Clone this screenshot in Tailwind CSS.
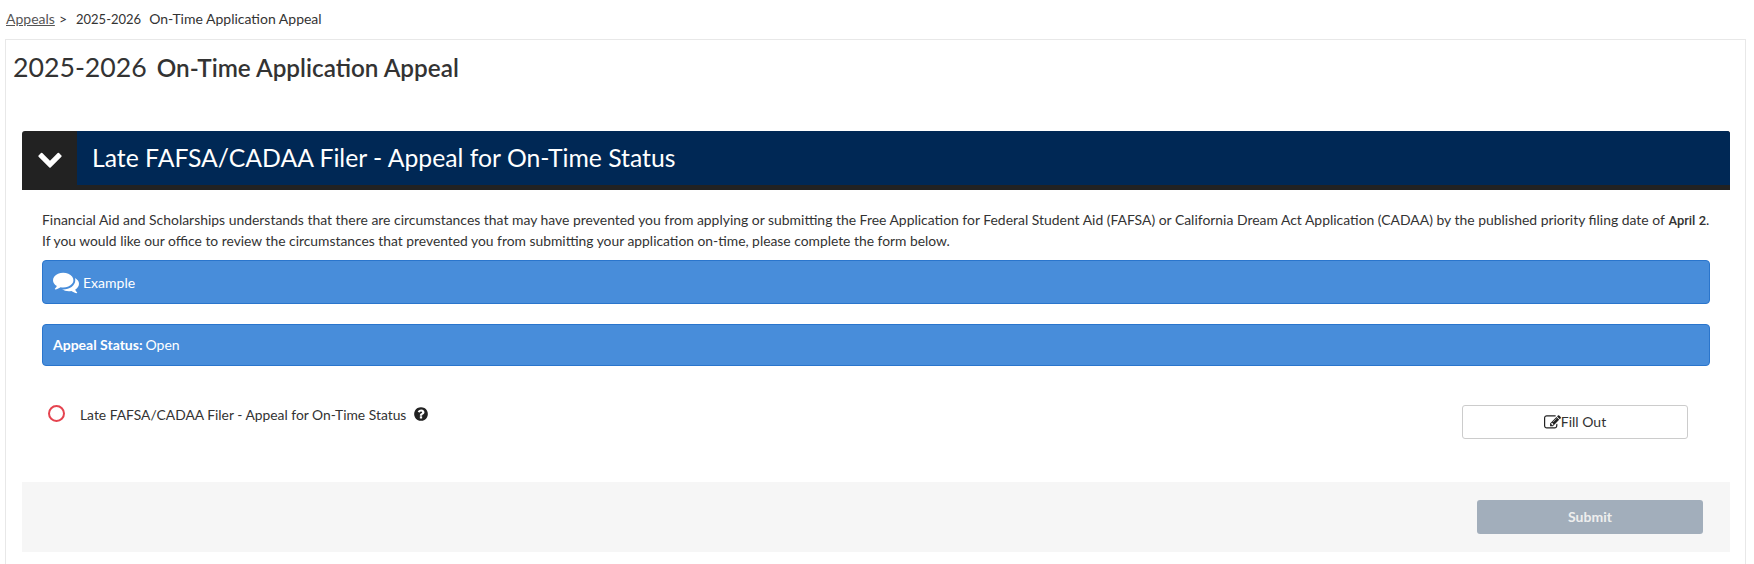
<!DOCTYPE html>
<html lang="en">
<head>
<meta charset="utf-8">
<title>On-Time Application Appeal</title>
<script src="https://cdn.jsdelivr.net/npm/@tailwindcss/browser@4"></script>
</head>
<body class="bg-white font-['Lato',sans-serif] text-[14px] leading-[20px] text-[#333] h-screen overflow-hidden">
  <!-- Breadcrumb -->
  <div class="h-[39px] pl-[6px] pt-[9px] flex text-[14px]">
    <a href="#" class="underline text-[#555]">Appeals</a>
    <span class="ml-[4px]">&gt;</span>
    <span class="ml-[9px] text-[13px]">2025-2026</span>
    <span class="ml-[8px]">On-Time Application Appeal</span>
  </div>

  <div class="ml-[5px] mr-[8px] border border-[#e8e8e8] pb-[40px]">
    <!-- Page title -->
    <div class="h-[91px] pl-[7px] pt-[9px] flex items-baseline gap-[10px] text-[#333]">
      <span class="text-[26.7px] leading-[36px]">2025-2026</span>
      <span class="text-[24.3px] leading-[36px] font-semibold">On-Time Application Appeal</span>
    </div>

    <div class="ml-[16px] mr-[15px]">
      <!-- Section header -->
      <div class="flex h-[59px] bg-[#222] rounded-t-[3px] overflow-hidden pb-[5px]">
        <div class="w-[55px] flex items-center justify-center">
          <svg class="w-[26px] h-[26px]" viewBox="0 0 1792 1792" fill="#fff"><path d="M1683 808l-742 741q-19 19-45 19t-45-19l-742-741q-19-19-19-45.500t19-45.500l166-165q19-19 45-19t45 19l531 531 531-531q19-19 45-19t45 19l166 165q19 19 19 45.500t-19 45.500z"/></svg>
        </div>
        <div class="flex-1 bg-[#002855] pl-[15px] flex items-center text-white text-[24.75px]">Late FAFSA/CADAA Filer - Appeal for On-Time Status</div>
      </div>

      <div class="pl-[20px] pr-[20px]">
        <p class="pt-[20px] text-[13.85px] leading-[19.5px] text-[#333] whitespace-nowrap">
          <span class="text-[13.93px]">Financial Aid and Scholarships understands that there are circumstances that may have prevented you from applying or submitting the Free Application for Federal Student Aid (FAFSA) or California Dream Act Application (CADAA) by the published priority filing date of</span> <span class="font-['Roboto',sans-serif] font-medium text-[13px]">April 2</span>.<br>
          If you would like our office to review the circumstances that prevented you from submitting your application on-time, please complete the form below.
        </p>

        <div class="mt-[10px] h-[44px] bg-[#488dda] border border-[#2a75cc] rounded-[4px] pl-[10px] flex items-center text-white text-[14px]">
          <svg class="w-[26px] h-[26px] mr-[4px]" viewBox="0 0 1792 1792" fill="#fff"><path d="M1408 768q0 139-94 257t-256.500 186.500-353.500 68.500q-86 0-176-16-124 88-278 128-36 9-86 16h-3q-11 0-20.500-8t-11.500-21q-1-3-1-6.500t.5-6.500 2-6l2.500-5 3.500-5.500 4-5 4.500-5 4-4.500q5-6 23-25t26-29.500 22.500-29 25-38.500 20.500-44q-124-72-195-177t-71-224q0-139 94-257t256.500-186.500 353.500-68.500 353.500 68.500 256.500 186.500 94 257zm384 256q0 120-71 224.500t-195 176.500q10 24 20.500 44t25 38.500 22.500 29 26 29.500 23 25q1 1 4 4.500t4.500 5 4 5 3.500 5.500l2.500 5 2 6 .5 6.500-1 6.500q-3 14-13 22t-22 7q-50-7-86-16-154-40-278-128-90 16-176 16-271 0-472-132 58 4 88 4 161 0 309-45t264-129q125-92 192-212t67-254q0-77-23-152 129 71 204 178t75 230z"/></svg>
          <span class="pt-[1px]">Example</span>
        </div>

        <div class="mt-[20px] h-[42px] bg-[#488dda] border border-[#2a75cc] rounded-[4px] pl-[10px] flex items-center text-white text-[14px]">
          <b class="font-bold">Appeal Status:</b><span class="ml-[3px]">Open</span>
        </div>

        <!-- Form row -->
        <div class="h-[116px] flex items-start">
          <div class="mt-[39px] ml-[6px] w-[17px] h-[17px] rounded-full border-2 border-[#e5434f]"></div>
          <span class="mt-[39px] ml-[15px] text-[13.85px]">Late FAFSA/CADAA Filer - Appeal for On-Time Status</span>
          <svg class="mt-[40px] ml-[7px] w-[16px] h-[16px]" viewBox="0 0 1792 1792" fill="#222"><path d="M1024 1376v-192q0-14-9-23t-23-9h-192q-14 0-23 9t-9 23v192q0 14 9 23t23 9h192q14 0 23-9t9-23zm256-672q0-88-55.500-163t-138.500-116-170-41q-243 0-371 213-15 24 8 42l132 100q7 6 19 6 16 0 25-12 53-68 86-92 34-24 86-24 48 0 85.500 26t37.500 59q0 38-20 61t-68 45q-63 28-115.500 86.500t-52.500 125.500v36q0 14 9 23t23 9h192q14 0 23-9t9-23q0-19 21.500-49.500t54.500-49.500q32-18 49-28.500t46-35 44.500-48 28-60.500 12.500-81zm384 192q0 209-103 385.500t-279.500 279.500-385.500 103-385.500-103-279.500-279.500-103-385.500 103-385.500 279.500-279.500 385.500-103 385.500 103 279.500 279.500 103 385.500z"/></svg>
          <button class="ml-auto mr-[22px] mt-[39px] w-[226px] h-[34px] bg-white border border-[#ccc] rounded-[3px] flex items-center justify-center text-[14px]">
            <svg class="w-[17px] h-[17px]" viewBox="0 0 1792 1792" fill="#222"><path d="M888 1184l116-116-152-152-116 116v56h96v96h56zm440-720q-16-16-33 1l-350 350q-17 17-1 33t33-1l350-350q17-17 1-33zm80 594v190q0 119-84.500 203.500t-203.500 84.500h-832q-119 0-203.500-84.500t-84.500-203.500v-832q0-119 84.500-203.500t203.500-84.500h832q63 0 117 25 15 7 18 23 3 17-9 29l-49 49q-14 14-32 8-23-6-45-6h-832q-66 0-113 47t-47 113v832q0 66 47 113t113 47h832q66 0 113-47t47-113v-126q0-13 9-22l64-64q15-15 35-7t20 29zm-96-738l288 288-672 672h-288v-288zm444 132l-92 92-288-288 92-92q28-28 68-28t68 28l152 152q28 28 28 68t-28 68z"/></svg>
            Fill Out
          </button>
        </div>
      </div>

      <!-- Footer -->
      <div class="h-[70px] bg-[#f6f6f6] flex items-center justify-end pr-[27px]">
        <button class="w-[226px] h-[34px] bg-[#a2aebb] rounded-[3px] text-[#eee] font-bold text-[14px]">Submit</button>
      </div>
    </div>
  </div>
</body>
</html>
